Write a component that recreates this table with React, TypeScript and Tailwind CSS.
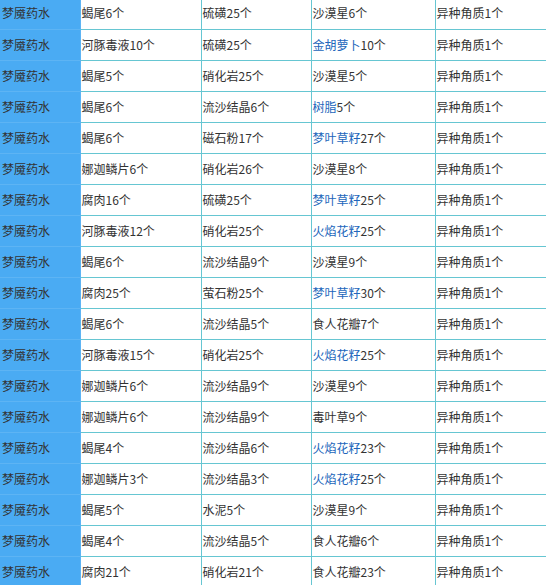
import React from "react";

type Row = [string, string, string, string | null, string];

// [col2, col3, linked name (blue), rest of col4, col5]
const rows: Row[] = [
	["蝎尾6个", "硫磺25个", "", "沙漠星6个", "异种角质1个"],
	["河豚毒液10个", "硫磺25个", "金胡萝卜", "10个", "异种角质1个"],
	["蝎尾5个", "硝化岩25个", "", "沙漠星5个", "异种角质1个"],
	["蝎尾6个", "流沙结晶6个", "树脂", "5个", "异种角质1个"],
	["蝎尾6个", "磁石粉17个", "梦叶草籽", "27个", "异种角质1个"],
	["娜迦鳞片6个", "硝化岩26个", "", "沙漠星8个", "异种角质1个"],
	["腐肉16个", "硫磺25个", "梦叶草籽", "25个", "异种角质1个"],
	["河豚毒液12个", "硝化岩25个", "火焰花籽", "25个", "异种角质1个"],
	["蝎尾6个", "流沙结晶9个", "", "沙漠星9个", "异种角质1个"],
	["腐肉25个", "萤石粉25个", "梦叶草籽", "30个", "异种角质1个"],
	["蝎尾6个", "流沙结晶5个", "", "食人花瓣7个", "异种角质1个"],
	["河豚毒液15个", "硝化岩25个", "火焰花籽", "25个", "异种角质1个"],
	["娜迦鳞片6个", "流沙结晶9个", "", "沙漠星9个", "异种角质1个"],
	["娜迦鳞片6个", "流沙结晶9个", "", "毒叶草9个", "异种角质1个"],
	["蝎尾4个", "流沙结晶6个", "火焰花籽", "23个", "异种角质1个"],
	["娜迦鳞片3个", "流沙结晶3个", "火焰花籽", "25个", "异种角质1个"],
	["蝎尾5个", "水泥5个", "", "沙漠星9个", "异种角质1个"],
	["蝎尾4个", "流沙结晶5个", "", "食人花瓣6个", "异种角质1个"],
	["腐肉21个", "硝化岩21个", "", "食人花瓣23个", "异种角质1个"],
];

const cell = "h-[31px] border-r border-b border-[#66c6d2] pl-[1px] align-middle";

export default function App() {
	return (
		<div
			className="w-[546px] h-[585px] overflow-hidden bg-white text-[12px] text-[#333]"
			style={{ fontFamily: '"Microsoft YaHei", "Noto Sans CJK SC", sans-serif' }}
		>
			<table className="-mt-[2px] w-[560px] table-fixed border-collapse">
				<colgroup>
					<col className="w-[80px]" />
					<col className="w-[121px]" />
					<col className="w-[110px]" />
					<col className="w-[124px]" />
					<col className="w-[125px]" />
				</colgroup>
				<tbody>
					{rows.map(([c2, c3, link, c4, c5], i) => (
						<tr key={i}>
							<td className="h-[31px] border-b border-r border-[#5db4f4] bg-[#4aabf3] pl-[2px] align-middle text-[#333]">
								梦魇药水
							</td>
							<td className={cell}>{c2}</td>
							<td className={cell}>{c3}</td>
							<td className={cell}>
								{link && <span className="text-[#2266bb]">{link}</span>}
								{c4}
							</td>
							<td className={cell}>{c5}</td>
						</tr>
					))}
				</tbody>
			</table>
		</div>
	);
}
